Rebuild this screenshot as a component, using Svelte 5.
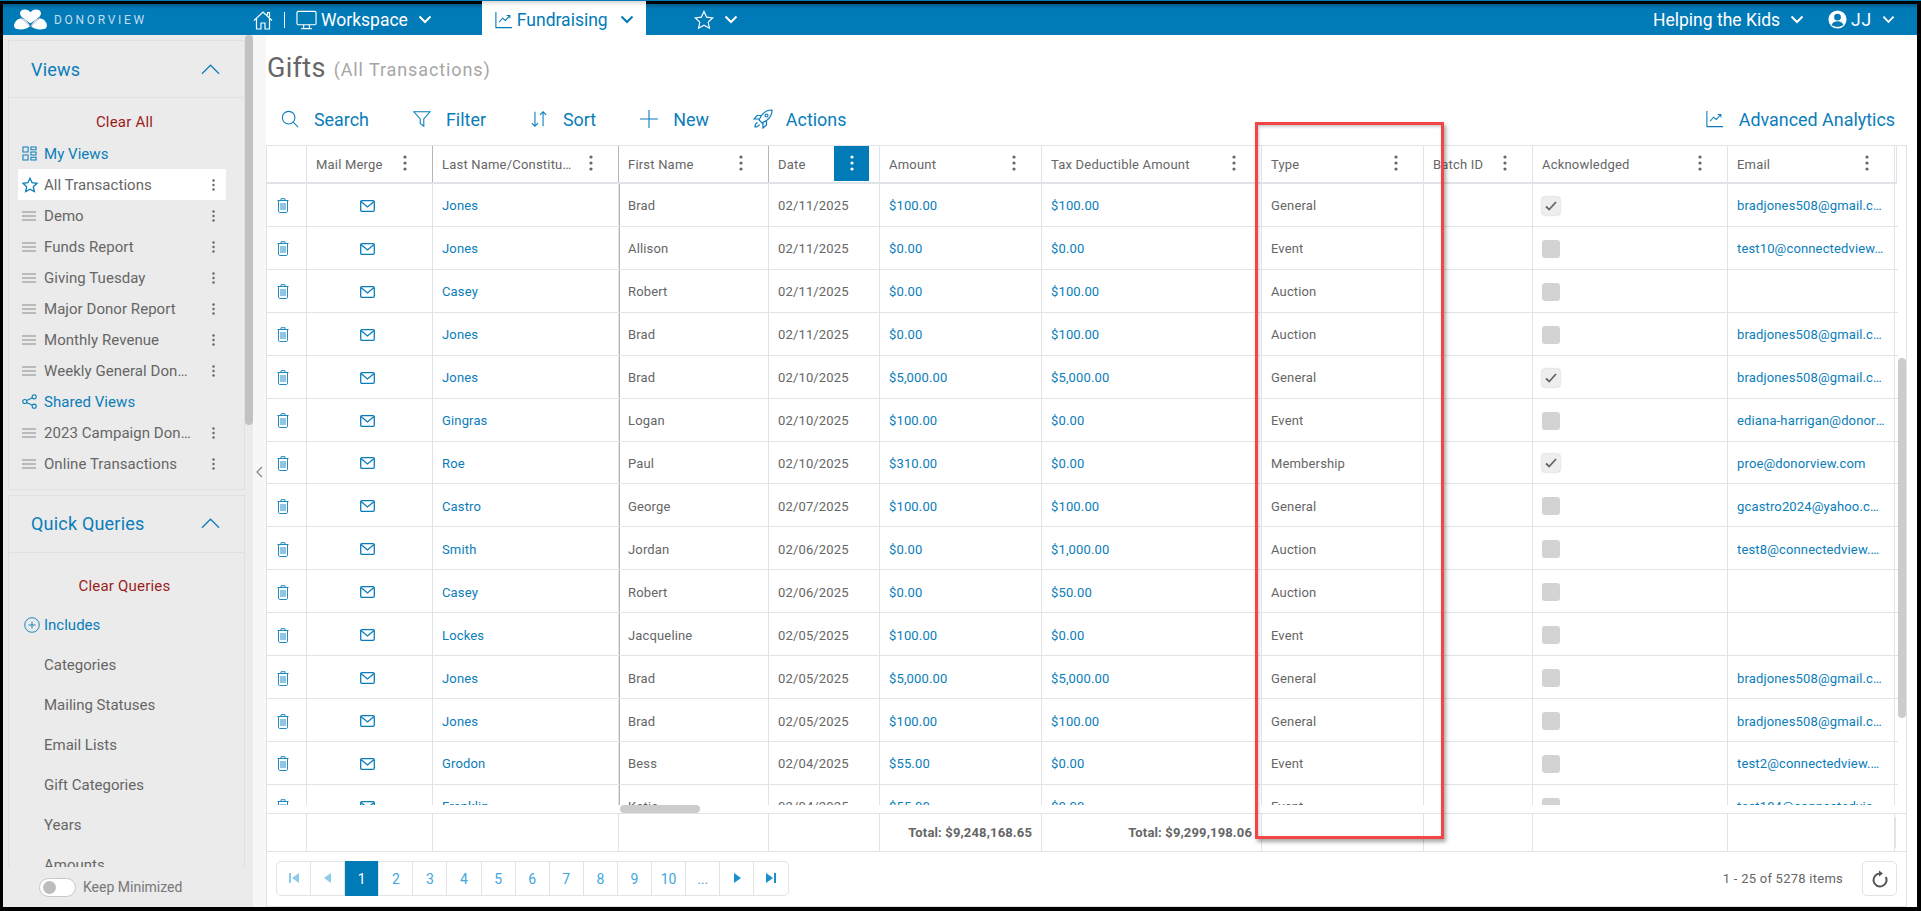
<script>
    const views = ["Demo", "Funds Report", "Giving Tuesday", "Major Donor Report", "Monthly Revenue", "Weekly General Donations"];
    const shared = ["2023 Campaign Donations", "Online Transactions"];
    const queries = ["Categories", "Mailing Statuses", "Email Lists", "Gift Categories", "Years", "Amounts"];
    const columns = ["", "Mail Merge", "Last Name/Constituent", "First Name", "Date", "Amount", "Tax Deductible Amount", "Type", "Batch ID", "Acknowledged", "Email"];
    const rows = [
        ["Jones", "Brad", "02/11/2025", "$100.00", "$100.00", "General", true, "bradjones508@gmail.com"],
        ["Jones", "Allison", "02/11/2025", "$0.00", "$0.00", "Event", false, "test10@connectedview.com"],
        ["Casey", "Robert", "02/11/2025", "$0.00", "$100.00", "Auction", false, ""],
        ["Jones", "Brad", "02/11/2025", "$0.00", "$100.00", "Auction", false, "bradjones508@gmail.com"],
        ["Jones", "Brad", "02/10/2025", "$5,000.00", "$5,000.00", "General", true, "bradjones508@gmail.com"],
        ["Gingras", "Logan", "02/10/2025", "$100.00", "$0.00", "Event", false, "ediana-harrigan@donorview.com"],
        ["Roe", "Paul", "02/10/2025", "$310.00", "$0.00", "Membership", true, "proe@donorview.com"],
        ["Castro", "George", "02/07/2025", "$100.00", "$100.00", "General", false, "gcastro2024@yahoo.com"],
        ["Smith", "Jordan", "02/06/2025", "$0.00", "$1,000.00", "Auction", false, "test8@connectedview.com"],
        ["Casey", "Robert", "02/06/2025", "$0.00", "$50.00", "Auction", false, ""],
        ["Lockes", "Jacqueline", "02/05/2025", "$100.00", "$0.00", "Event", false, ""],
        ["Jones", "Brad", "02/05/2025", "$5,000.00", "$5,000.00", "General", false, "bradjones508@gmail.com"],
        ["Jones", "Brad", "02/05/2025", "$100.00", "$100.00", "General", false, "bradjones508@gmail.com"],
        ["Grodon", "Bess", "02/04/2025", "$55.00", "$0.00", "Event", false, "test2@connectedview.com"],
        ["Franklin", "Katie", "02/04/2025", "$55.00", "$0.00", "Event", false, "test104@connectedview.com"]
    ];
    const pages = ["1", "2", "3", "4", "5", "6", "7", "8", "9", "10", "..."];
</script>

{#snippet chevron()}
    <svg class="chev" viewBox="0 0 14 9"><path d="M1.5 1.5 7 7l5.5-5.5" /></svg>
{/snippet}

{#snippet dots()}
    <svg class="dots" viewBox="0 0 4 16"><circle cx="2" cy="2" r="1.6" /><circle cx="2" cy="8" r="1.6" /><circle cx="2" cy="14" r="1.6" /></svg>
{/snippet}

{#snippet trend()}
    <svg class="ico" viewBox="0 0 20 20"><path d="M1 1v17.500h18M4.500 12.500l4-4.500 3 2.500 5-5.500M13 5h3.500v3" /></svg>
{/snippet}

{#snippet lines()}
    <svg class="lines" viewBox="0 0 14 10"><path d="M0 1h14M0 5h14M0 9h14" /></svg>
{/snippet}

<div class="page">
    <header class="topbar">
        <div class="brand">
            <svg class="logo" viewBox="0 0 36 22">
                <path class="logo-fill" d="M18 15C12 11 7 8 7 4.500 7 1.500 10 0 13 .5 15.500 1 17 2 18 3.500 19 2 20.500 1 23 .5 26 0 29 1.500 29 4.500 29 8 24 11 18 15z" />
                <path class="logo-fill" d="M8 10c3-.5 7 3 9.500 7.500C15 21 9 22 4 21 0 20 0 16 2.500 13 4 11 6 10 8 10z" />
                <path class="logo-fill" d="M28 10c-3-.5-7 3-9.500 7.500C21 21 27 22 32 21c4-1 4-5 1.500-8C32 11 30 10 28 10z" />
                <path class="logo-line" d="M8 9c3 3 8 7 10 10M28 9c-3 3-8 7-10 10" />
            </svg>
            <span>DONORVIEW</span>
        </div>
        <nav class="nav">
            <svg class="ico home" viewBox="0 0 20 20"><path d="M1 10.500 10 2l9 8.500M3.500 8.500V19h4.500v-6h4v6h4.500V8.500M14.500 5V2.500h2v4.500" /></svg>
            <span class="sep"></span>
            <svg class="ico monitor" viewBox="0 0 22 20"><rect x="1" y="1" width="20" height="14" rx="1.500" /><path d="M8 15v3.500M14 15v3.500M5.500 19h11" /></svg>
            <span class="nav-label">Workspace</span>
            {@render chevron()}
            <div class="tab">
                {@render trend()}
                <span class="nav-label">Fundraising</span>
                {@render chevron()}
            </div>
            <svg class="ico star" viewBox="0 0 20 20"><path d="M10 1.500l2.600 5.600 6.100.8-4.500 4.200 1.200 6.100L10 15.200l-5.400 3 1.200-6.100L1.300 7.900l6.100-.8z" /></svg>
            {@render chevron()}
        </nav>
        <div class="account">
            <span class="nav-label">Helping the Kids</span>
            {@render chevron()}
            <svg class="user" viewBox="0 0 20 20">
                <circle cx="10" cy="10" r="9.500" fill="#fff" />
                <circle cx="10" cy="7.500" r="3.500" fill="#017ab8" />
                <path d="M3.800 15.500c1.500-3 3.500-3.700 6.200-3.700s4.700.7 6.200 3.700c-3 3-9.400 3-12.400 0z" fill="#017ab8" />
            </svg>
            <span class="nav-label jj">JJ</span>
            {@render chevron()}
        </div>
    </header>

    <div class="body">
        <aside class="sidebar">
            <div class="side-scroll">
                <section class="panel views">
                    <div class="panel-head">
                        <span>Views</span>
                        <svg class="up" viewBox="0 0 20 11"><path d="M1 10 10 1l9 9" /></svg>
                    </div>
                    <div class="clear">Clear All</div>
                    <div class="side-row head">
                        <svg class="side-ico" viewBox="0 0 16 16"><path d="M1 1h5.500v5.500H1zM9.500 1H15v3H9.500zM1 9.500h5.500V15H1zM9.500 6.500H15v3H9.500zM9.500 12H15v3H9.500z" /></svg>
                        <span>My Views</span>
                    </div>
                    <div class="side-row active">
                        <svg class="side-ico star-ico" viewBox="0 0 20 20"><path d="M10 1.500l2.600 5.600 6.100.8-4.500 4.200 1.200 6.100L10 15.200l-5.400 3 1.200-6.100L1.300 7.900l6.100-.8z" /></svg>
                        <span class="label">All Transactions</span>
                        {@render dots()}
                    </div>
                    {#each views as view}
                        <div class="side-row">
                            {@render lines()}
                            <span class="label">{view}</span>
                            {@render dots()}
                        </div>
                    {/each}
                    <div class="side-row head">
                        <svg class="side-ico" viewBox="0 0 16 16"><circle cx="3" cy="8" r="2.200" /><circle cx="13" cy="3" r="2.200" /><circle cx="13" cy="13" r="2.200" /><path d="M5 7l6-3M5 9l6 3" /></svg>
                        <span>Shared Views</span>
                    </div>
                    {#each shared as view}
                        <div class="side-row">
                            {@render lines()}
                            <span class="label">{view}</span>
                            {@render dots()}
                        </div>
                    {/each}
                </section>
                <section class="panel queries">
                    <div class="panel-head">
                        <span>Quick Queries</span>
                        <svg class="up" viewBox="0 0 20 11"><path d="M1 10 10 1l9 9" /></svg>
                    </div>
                    <div class="clear">Clear Queries</div>
                    <div class="includes">
                        <svg class="plus-ico" viewBox="0 0 16 16"><circle cx="8" cy="8" r="7.300" /><path d="M8 4.500v7M4.500 8h7" /></svg>
                        <span>Includes</span>
                    </div>
                    {#each queries as query}
                        <div class="query">{query}</div>
                    {/each}
                </section>
                <div class="side-thumb"></div>
            </div>
            <div class="keep">
                <span class="toggle"><i></i></span>
                <span>Keep Minimized</span>
            </div>
        </aside>
        <div class="rail">
            <svg viewBox="0 0 7 12"><path d="M6 1 1 6l5 5" /></svg>
        </div>

        <main class="main">
            <div class="title"><h1>Gifts</h1><span>(All Transactions)</span></div>
            <div class="toolbar">
                <button>
                    <svg class="ico" viewBox="0 0 20 20"><circle cx="8.500" cy="8.500" r="7" /><path d="M13.500 13.500 19 19" /></svg>
                    Search
                </button>
                <button>
                    <svg class="ico" viewBox="0 0 20 20"><path d="M1 2h18l-7 8v8l-4-3v-5z" /></svg>
                    Filter
                </button>
                <button>
                    <svg class="ico" viewBox="0 0 20 20"><path d="M5.500 2v16M2 14.500l3.500 3.500L9 14.500M14.500 18V2M11 5.500 14.500 2 18 5.500" /></svg>
                    Sort
                </button>
                <button>
                    <svg class="ico" viewBox="0 0 20 20"><path d="M10 0v20M0 10h20" /></svg>
                    New
                </button>
                <button>
                    <svg class="ico rocket" viewBox="0 0 20 20"><path d="M19 1c-5 0-8 2-10.500 5.500L6 11l3 3 4.500-2.500C17 9 19 6 19 1zM8.500 6.500H4L1 10h5M13.500 11.500V16L10 19v-5" /><circle cx="13.500" cy="6.500" r="1.500" /><path d="M4.500 13.500C2.500 14.500 2 16.500 2 18c1.500 0 3.500-.5 4.500-2.500" /></svg>
                    Actions
                </button>
                <button class="analytics">
                    {@render trend()}
                    Advanced Analytics
                </button>
            </div>

            <div class="grid">
                <div class="head-row">
                    {#each columns as column, i}
                        <div class="cell th" class:hard={i === 1 || i === 2 || i === 3}>
                            {#if column}
                                <span class="th-text">{column}</span>
                                <span class="menu" class:open={column === "Date"}>{@render dots()}</span>
                            {/if}
                        </div>
                    {/each}
                </div>
                <div class="rows-wrap">
                    <div class="rows">
                        {#each rows as row}
                            <div class="row">
                                <div class="cell icon-cell left">
                                    <svg class="trash" viewBox="0 0 12 15"><path d="M.5 2.500h11M4 2.500V.7h4v1.800M1.500 2.500v10.800c0 .7.500 1.200 1.200 1.200h6.600c.7 0 1.200-.5 1.200-1.200V2.500M4 5v7M6 5v7M8 5v7" /></svg>
                                </div>
                                <div class="cell icon-cell mail-cell">
                                    <svg class="mail" viewBox="0 0 15 12"><rect x=".7" y=".7" width="13.600" height="10.600" rx="1.200" /><path d="M1 1.500 7.500 7 14 1.500" /></svg>
                                </div>
                                <div class="cell link">{row[0]}</div>
                                <div class="cell hard-left">{row[1]}</div>
                                <div class="cell">{row[2]}</div>
                                <div class="cell link">{row[3]}</div>
                                <div class="cell link">{row[4]}</div>
                                <div class="cell">{row[5]}</div>
                                <div class="cell"></div>
                                <div class="cell">
                                    <span class="check" class:on={row[6]}>
                                        {#if row[6]}
                                            <svg viewBox="0 0 12 10"><path d="M1 5.500 4.200 8.500 11 1" /></svg>
                                        {/if}
                                    </span>
                                </div>
                                <div class="cell link"><span class="clip">{row[7]}</span></div>
                            </div>
                        {/each}
                    </div>
                    <div class="h-thumb"></div>
                    <div class="v-thumb"></div>
                </div>
                <div class="foot-row">
                    <div class="cell"></div><div class="cell"></div><div class="cell"></div><div class="cell"></div><div class="cell"></div>
                    <div class="cell total">Total: $9,248,168.65</div>
                    <div class="cell total">Total: $9,299,198.06</div>
                    <div class="cell"></div><div class="cell"></div><div class="cell"></div><div class="cell"></div>
                </div>
                <div class="pager-row">
                    <div class="pager">
                        <span class="pg faded"><svg viewBox="0 0 10 10"><path d="M0 0h2v10H0zM10 0v10L3 5z" /></svg></span>
                        <span class="pg faded"><svg viewBox="0 0 10 10"><path d="M8 0v10L1 5z" /></svg></span>
                        {#each pages as page, i}
                            <span class="pg" class:current={i === 0}>{page}</span>
                        {/each}
                        <span class="pg"><svg viewBox="0 0 10 10"><path d="M2 0v10l7-5z" /></svg></span>
                        <span class="pg"><svg viewBox="0 0 10 10"><path d="M0 0v10l7-5zM8 0h2v10H8z" /></svg></span>
                    </div>
                    <span class="count">1 - 25 of 5278 items</span>
                    <span class="refresh">
                        <svg viewBox="0 0 18 18"><path d="M9 3.500a6.500 6.500 0 1 0 5.800 3.500" /><path class="tip" d="M8 .5v6l4-3z" /></svg>
                    </span>
                </div>
            </div>
        </main>
    </div>
    <div class="callout"></div>
</div>

<style>
    :global(body) {
        margin: 0;
        background: #000;
    }

    .page {
        position: relative;
        box-sizing: border-box;
        width: 1921px;
        height: 911px;
        padding: 3px 4px 4px 3px;
        border-top: 1px solid #0879b4;
        background: #000;
        display: flex;
        flex-direction: column;
        overflow: hidden;
        font-family: Roboto, "Liberation Sans", sans-serif;
        color: #666;
    }

    svg {
        display: block;
        flex: none;
    }

    .topbar {
        height: 31px;
        flex: none;
        display: flex;
        align-items: center;
        background: linear-gradient(#015f90, #017ab8 5px);
        color: #fff;
    }

    .brand {
        width: 250px;
        flex: none;
        display: flex;
        align-items: center;
        padding-left: 10px;
        box-sizing: border-box;
        gap: 6px;
        font-size: 12px;
        letter-spacing: 2.7px;
        color: #c3deee;
    }

    .logo {
        width: 35px;
        height: 21px;
    }

    .logo-fill {
        fill: #fff;
    }

    .logo-line {
        fill: none;
        stroke: #a9a5c8;
        stroke-width: 1;
    }

    .nav {
        display: flex;
        align-items: center;
        height: 100%;
    }

    .nav-label {
        font-size: 17.5px;
        white-space: nowrap;
    }

    .ico {
        width: 20px;
        height: 20px;
        fill: none;
        stroke: currentColor;
        stroke-width: 1.2;
    }

    .sep {
        width: 1px;
        height: 16px;
        background: #fff;
        margin: 0 11px;
    }

    .monitor {
        width: 21px;
        margin-right: 4px;
    }

    .chev {
        width: 14px;
        height: 9px;
        fill: none;
        stroke: currentColor;
        stroke-width: 2;
        margin-left: 10px;
    }

    .tab {
        height: calc(100% + 4px);
        margin: -4px 0 0 50px;
        width: 164px;
        box-sizing: border-box;
        padding: 4px 0 0 13px;
        display: flex;
        align-items: center;
        background: linear-gradient(#cfcfcf, #fff 6px);
        color: #017ab8;
    }

    .tab .ico {
        width: 18px;
        height: 18px;
        margin-right: 4px;
    }

    .tab .chev {
        margin-left: 12px;
    }

    .star {
        margin-left: 48px;
    }

    .account {
        margin-left: auto;
        display: flex;
        align-items: center;
        padding-right: 22px;
    }

    .user {
        width: 19px;
        height: 19px;
        margin: 0 4px 0 24px;
    }

    .jj {
        letter-spacing: 0.8px;
    }

    .account .jj + .chev {
        margin-left: 10px;
        width: 13px;
    }

    .body {
        flex: 1;
        display: flex;
        min-height: 0;
    }

    .sidebar {
        width: 250px;
        flex: none;
        background: #ebebeb;
        display: flex;
        flex-direction: column;
    }

    .side-scroll {
        position: relative;
        flex: 1;
        min-height: 0;
        overflow: hidden;
        padding: 5px 8px 0 5px;
    }

    .side-thumb {
        position: absolute;
        top: 0;
        right: 0;
        width: 8px;
        height: 390px;
        border-radius: 4px;
        background: #c2c2c2;
    }

    .panel {
        border: 1px solid #e0e0e4;
        box-sizing: border-box;
    }

    .views {
        height: 450px;
    }

    .queries {
        margin-top: 5px;
        border-bottom: 0;
    }

    .panel-head {
        display: flex;
        align-items: center;
        justify-content: space-between;
        font-size: 18px;
        letter-spacing: 0.2px;
        color: #0a7dba;
        padding: 0 24px 0 22px;
        border-bottom: 1px solid #e0e0e4;
        height: 56px;
    }

    .queries .panel-head {
        padding-bottom: 2px;
        box-sizing: content-box;
        height: 54px;
    }

    .up {
        width: 19px;
        height: 11px;
        fill: none;
        stroke: #0a7dba;
        stroke-width: 1.3;
    }

    .clear {
        text-align: center;
        color: #9c1c1c;
        font-size: 15px;
        letter-spacing: 0.2px;
        line-height: 20px;
        padding: 14px 4px 6px 0;
    }

    .queries .clear {
        padding: 23px 4px 9px 0;
    }

    .side-row {
        height: 31px;
        display: flex;
        align-items: center;
        font-size: 15px;
        letter-spacing: 0.05px;
        margin: 0 18px 0 9px;
        padding-left: 4px;
        box-sizing: border-box;
    }

    .side-row.head {
        color: #0a7dba;
    }

    .side-row.active {
        background: #fff;
    }

    .side-ico {
        width: 15px;
        height: 15px;
        margin-right: 7px;
        fill: none;
        stroke: #0a7dba;
        stroke-width: 1.1;
    }

    .star-ico {
        width: 16px;
        height: 16px;
        margin-right: 6px;
        stroke-width: 1.6;
    }

    .lines {
        width: 14px;
        height: 10px;
        margin-right: 8px;
        stroke: #aaa;
        stroke-width: 1.4;
        fill: none;
    }

    .label {
        flex: 1;
        min-width: 0;
        overflow: hidden;
        text-overflow: ellipsis;
        white-space: nowrap;
        margin-right: 18px;
    }

    .dots {
        width: 3px;
        height: 12px;
        fill: #666;
    }

    .side-row .dots {
        margin-right: 11px;
    }

    .includes {
        display: flex;
        align-items: center;
        height: 40px;
        font-size: 15px;
        color: #0a7dba;
        padding-left: 15px;
    }

    .plus-ico {
        width: 16px;
        height: 16px;
        margin-right: 4px;
        fill: none;
        stroke: #0a7dba;
        stroke-width: 0.9;
    }

    .query {
        height: 40px;
        line-height: 40px;
        font-size: 15px;
        padding-left: 35px;
    }

    .keep {
        height: 40px;
        flex: none;
        display: flex;
        align-items: center;
        padding-left: 36px;
        gap: 7px;
        font-size: 14px;
        color: #777;
    }

    .toggle {
        width: 37px;
        height: 19px;
        box-sizing: border-box;
        border: 1px solid #c8c8c8;
        border-radius: 10px;
        background: #fff;
        display: flex;
        align-items: center;
        padding-left: 3px;
    }

    .toggle i {
        width: 13px;
        height: 13px;
        border-radius: 50%;
        background: #bdbdbd;
    }

    .rail {
        width: 13px;
        flex: none;
        background: #f7f7f7;
        display: flex;
        justify-content: center;
        padding-top: 431px;
        box-sizing: border-box;
    }

    .rail svg {
        width: 7px;
        height: 12px;
        fill: none;
        stroke: #888;
        stroke-width: 1.3;
    }

    .main {
        flex: 1;
        min-width: 0;
        background: #fff;
        display: flex;
        flex-direction: column;
        padding-right: 10px;
    }

    .title {
        height: 64px;
        flex: none;
        display: flex;
        align-items: center;
        gap: 8px;
        padding: 2px 0 0 1px;
        box-sizing: border-box;
    }

    h1 {
        margin: 0;
        font-size: 27px;
        font-weight: 400;
        letter-spacing: 0.3px;
        color: #666;
    }

    .title span {
        font-size: 18px;
        letter-spacing: 0.9px;
        color: #a6a6a6;
        padding-top: 3px;
    }

    .toolbar {
        height: 40px;
        margin-bottom: 6px;
        flex: none;
        display: flex;
        align-items: center;
        padding-left: 15px;
        gap: 44px;
    }

    button {
        all: unset;
        display: flex;
        align-items: center;
        gap: 15px;
        font-size: 17.9px;
        color: #0a7dba;
        font-family: inherit;
    }

    button .ico {
        width: 18px;
        height: 18px;
    }

    button .rocket {
        width: 20px;
        height: 20px;
        margin-right: -2px;
    }

    .analytics {
        margin-left: auto;
        padding-right: 12px;
    }

    .grid {
        flex: 1;
        min-height: 0;
        display: flex;
        flex-direction: column;
        border: 1px solid #e0e3e8;
        box-sizing: border-box;
    }

    .head-row, .row, .foot-row {
        display: grid;
        grid-template-columns: 40px 126px 186px 150px 111px 162px 220px 162px 109px 195px 167px;
    }

    .head-row {
        height: 38px;
        flex: none;
        box-sizing: border-box;
        border-bottom: 2px solid #e0e3e8;
        border-right: 1px solid #e0e3e8;
        width: 1630px;
    }

    .cell {
        border-right: 1px solid #e0e3e8;
        display: flex;
        align-items: center;
        padding-left: 9px;
        min-width: 0;
        box-sizing: border-box;
        font-size: 13px;
        letter-spacing: 0.15px;
        white-space: nowrap;
    }

    .row .cell {
        padding-top: 2px;
    }

    .th {
        justify-content: space-between;
        padding-right: 10px;
        letter-spacing: 0.2px;
    }

    .th.hard {
        border-right-color: #b5b5b5;
    }

    .th-text {
        overflow: hidden;
        text-overflow: ellipsis;
        min-width: 0;
    }

    .menu {
        width: 35px;
        height: 35px;
        flex: none;
        align-self: flex-start;
        display: flex;
        align-items: center;
        justify-content: center;
    }

    .menu.open {
        background: #017ab8;
    }

    .menu.open .dots {
        fill: #fff;
    }

    .th .dots {
        width: 4px;
        height: 16px;
        margin-top: -2px;
    }

    .rows-wrap {
        position: relative;
        flex: 1;
        min-height: 0;
        display: flex;
        padding-bottom: 8px;
    }

    .rows {
        flex: 1;
        min-width: 0;
        overflow: hidden;
    }

    .row {
        height: 42.93px;
        width: 1631px;
        box-sizing: border-box;
        border-bottom: 1px solid #e0e3e8;
    }

    .hard-left {
        box-shadow: inset 1px 0 0 #b5b5b5;
    }

    .link {
        color: #0a7dba;
    }

    .icon-cell {
        justify-content: center;
        padding-left: 0;
    }

    .icon-cell.left {
        justify-content: flex-start;
        padding-left: 10px;
    }

    .mail-cell {
        padding-right: 5px;
    }

    .trash {
        width: 12px;
        height: 15px;
        fill: none;
        stroke: #0a7dba;
        stroke-width: 0.9;
    }

    .mail {
        width: 15px;
        height: 12px;
        fill: none;
        stroke: #0a7dba;
        stroke-width: 1.3;
    }

    .clip {
        max-width: 148px;
        overflow: hidden;
        text-overflow: ellipsis;
    }

    .check {
        width: 18px;
        height: 18px;
        border-radius: 3px;
        background: #d3d3d3;
        display: flex;
        align-items: center;
        justify-content: center;
    }

    .check.on {
        background: #eee;
        box-shadow: 0 0 2px #aaa;
    }

    .check svg {
        width: 12px;
        height: 10px;
        fill: none;
        stroke: #666;
        stroke-width: 1.8;
    }

    .h-thumb {
        position: absolute;
        left: 353px;
        bottom: 0;
        width: 80px;
        height: 8px;
        border-radius: 4px;
        background: #ccc;
    }

    .v-thumb {
        position: absolute;
        right: 0;
        top: 174px;
        width: 8px;
        height: 360px;
        border-radius: 4px;
        background: #ccc;
    }

    .foot-row {
        height: 39px;
        flex: none;
        box-sizing: border-box;
        border-top: 1px solid #e0e3e8;
        border-bottom: 1px solid #e0e3e8;
    }

    .foot-row .cell:last-child {
        box-shadow: 4px 0 0 -3px #e0e3e8;
    }

    .total {
        justify-content: flex-end;
        padding: 0 9px 0 0;
        font-weight: 700;
    }

    .pager-row {
        height: 54px;
        flex: none;
        display: flex;
        align-items: flex-start;
        padding: 9px 9px 0 9px;
        font-size: 13px;
        box-sizing: border-box;
    }

    .pager {
        display: flex;
        height: 35px;
        box-sizing: border-box;
        border: 1px solid #e0e3e8;
        border-radius: 5px;
    }

    .pg {
        width: 34.1px;
        box-sizing: border-box;
        border-right: 1px solid #e0e3e8;
        display: flex;
        align-items: center;
        justify-content: center;
        color: #3fa6df;
        font-size: 14px;
        fill: #1a8fd0;
    }

    .pg:last-child {
        border-right: 0;
    }

    .pg svg {
        width: 10px;
        height: 10px;
        margin-top: -2px;
    }

    .pg.faded {
        fill: #8ccbea;
    }

    .pg.current {
        background: #017ab8;
        color: #fff;
        margin: -1px 0;
    }

    .count {
        margin-left: auto;
        margin-right: 19px;
        line-height: 35px;
        letter-spacing: 0.25px;
    }

    .refresh {
        width: 35px;
        height: 35px;
        box-sizing: border-box;
        border: 1px solid #e0e3e8;
        border-radius: 5px;
        display: flex;
        align-items: center;
        justify-content: center;
    }

    .refresh svg {
        width: 18px;
        height: 18px;
        fill: none;
        stroke: #555;
        stroke-width: 2;
    }

    .refresh .tip {
        fill: #555;
        stroke: none;
    }

    .callout {
        position: absolute;
        left: 1255px;
        top: 121px;
        width: 189px;
        height: 717px;
        box-sizing: border-box;
        border: 3px solid #f44545;
        box-shadow: 2px 3px 4px rgba(0, 0, 0, 0.35), inset 1px 2px 3px rgba(0, 0, 0, 0.2);
        pointer-events: none;
    }
</style>
